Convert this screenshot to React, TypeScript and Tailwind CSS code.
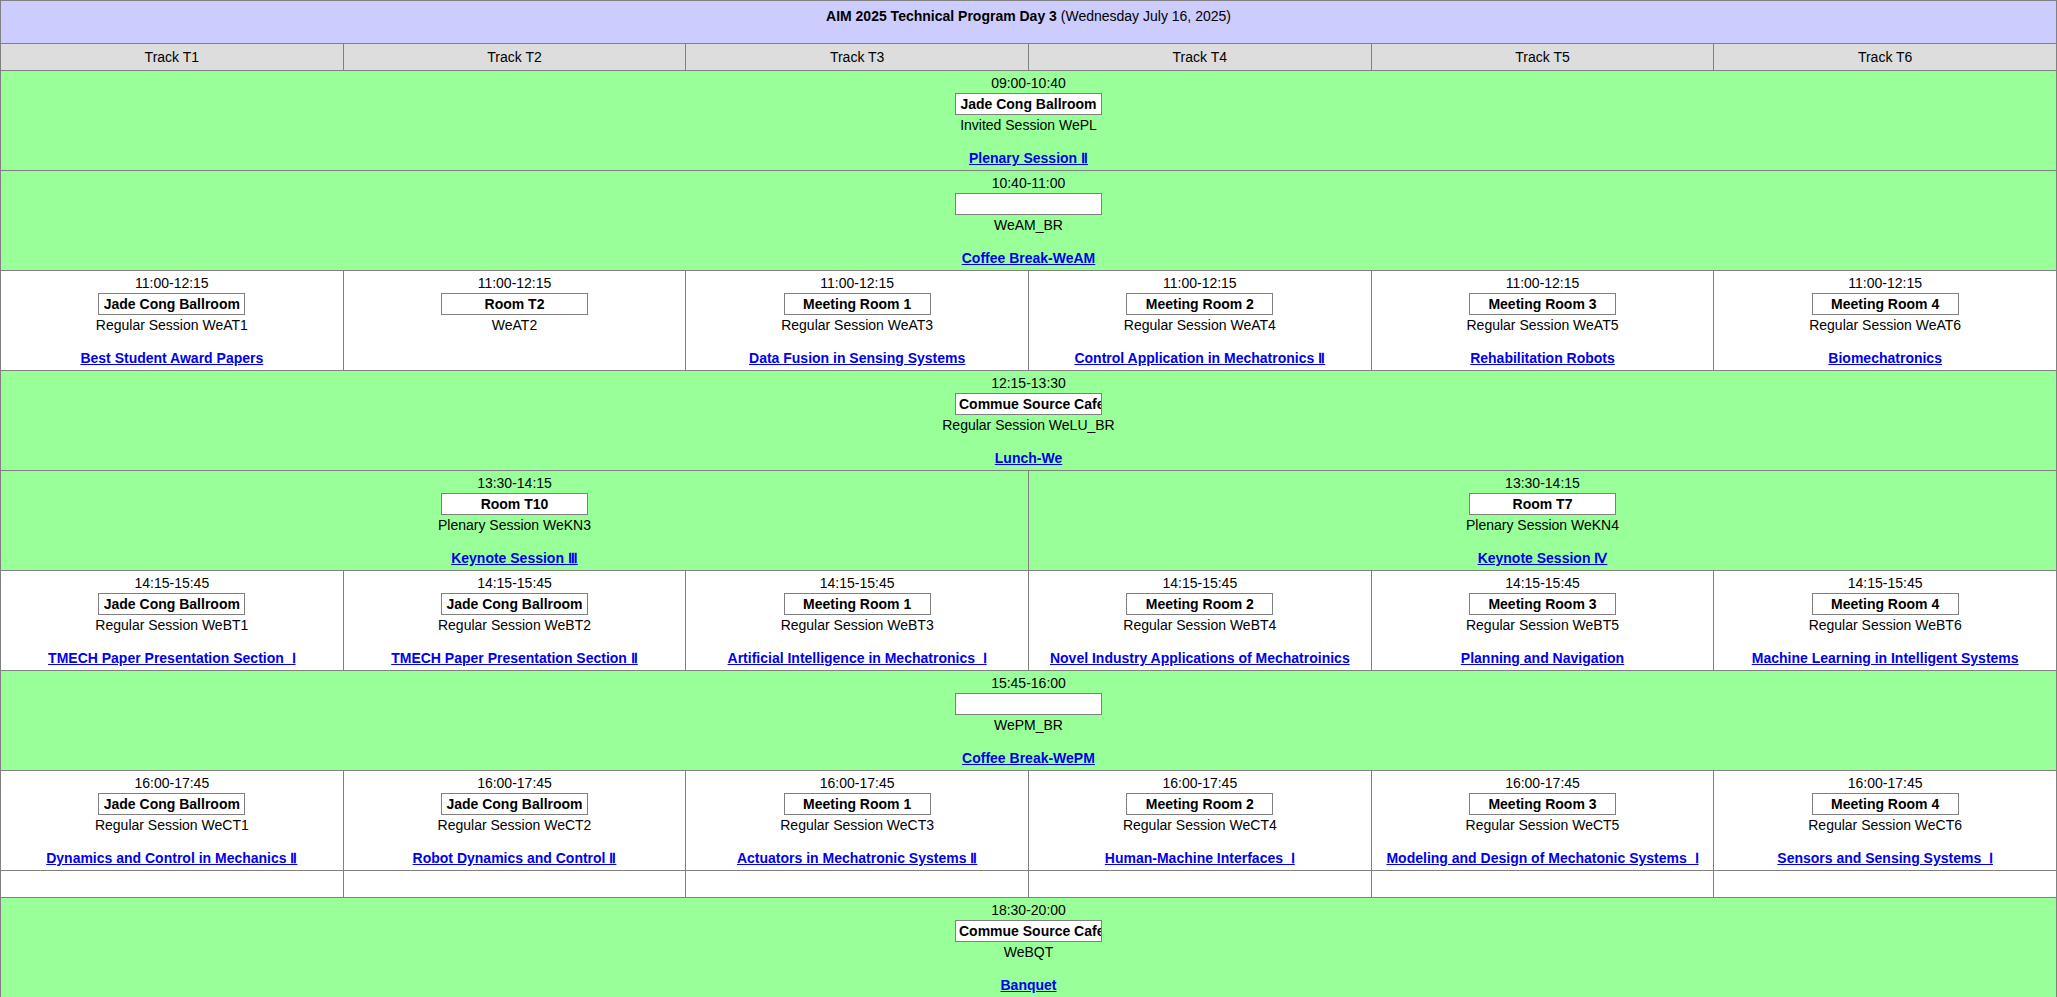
import React from 'react';

type Cell = { time: string; room: string; session: string; title?: string; span?: number };

const green = 'bg-[#99ff99]';

function SessionCell({ cell, bg }: { cell: Cell; bg: string }) {
  const span =
    cell.span === 6 ? 'col-span-6' : cell.span === 3 ? 'col-span-3' : 'col-span-1';
  return (
    <div className={`${span} ${bg} h-[100px] border-r border-b border-[#808080] flex flex-col items-center pt-[2px]`}>
      <div className="h-5 leading-5">{cell.time}</div>
      <div className="w-[147px] h-[22px] border border-[#808080] bg-white font-bold leading-5 px-[3px] text-center whitespace-nowrap overflow-hidden">
        {cell.room}
      </div>
      <div className="h-5 leading-5">{cell.session}</div>
      <div className="h-[13px]" />
      {cell.title && (
        <a href="#" className="h-5 leading-5 font-bold text-[#0000ee] underline">
          {cell.title}
        </a>
      )}
    </div>
  );
}

const rows: { bg: string; cells: Cell[] }[] = [
  { bg: green, cells: [{ time: '09:00-10:40', room: 'Jade Cong Ballroom', session: 'Invited Session WePL', title: 'Plenary Session Ⅱ', span: 6 }] },
  { bg: green, cells: [{ time: '10:40-11:00', room: '', session: 'WeAM_BR', title: 'Coffee Break-WeAM', span: 6 }] },
  {
    bg: 'bg-white',
    cells: [
      { time: '11:00-12:15', room: 'Jade Cong Ballroom', session: 'Regular Session WeAT1', title: 'Best Student Award Papers' },
      { time: '11:00-12:15', room: 'Room T2', session: 'WeAT2' },
      { time: '11:00-12:15', room: 'Meeting Room 1', session: 'Regular Session WeAT3', title: 'Data Fusion in Sensing Systems' },
      { time: '11:00-12:15', room: 'Meeting Room 2', session: 'Regular Session WeAT4', title: 'Control Application in Mechatronics Ⅱ' },
      { time: '11:00-12:15', room: 'Meeting Room 3', session: 'Regular Session WeAT5', title: 'Rehabilitation Robots' },
      { time: '11:00-12:15', room: 'Meeting Room 4', session: 'Regular Session WeAT6', title: 'Biomechatronics' },
    ],
  },
  { bg: green, cells: [{ time: '12:15-13:30', room: 'Commue Source Cafe', session: 'Regular Session WeLU_BR', title: 'Lunch-We', span: 6 }] },
  {
    bg: green,
    cells: [
      { time: '13:30-14:15', room: 'Room T10', session: 'Plenary Session WeKN3', title: 'Keynote Session Ⅲ', span: 3 },
      { time: '13:30-14:15', room: 'Room T7', session: 'Plenary Session WeKN4', title: 'Keynote Session Ⅳ', span: 3 },
    ],
  },
  {
    bg: 'bg-white',
    cells: [
      { time: '14:15-15:45', room: 'Jade Cong Ballroom', session: 'Regular Session WeBT1', title: 'TMECH Paper Presentation Section  Ⅰ' },
      { time: '14:15-15:45', room: 'Jade Cong Ballroom', session: 'Regular Session WeBT2', title: 'TMECH Paper Presentation Section Ⅱ' },
      { time: '14:15-15:45', room: 'Meeting Room 1', session: 'Regular Session WeBT3', title: 'Artificial Intelligence in Mechatronics  Ⅰ' },
      { time: '14:15-15:45', room: 'Meeting Room 2', session: 'Regular Session WeBT4', title: 'Novel Industry Applications of Mechatroinics' },
      { time: '14:15-15:45', room: 'Meeting Room 3', session: 'Regular Session WeBT5', title: 'Planning and Navigation' },
      { time: '14:15-15:45', room: 'Meeting Room 4', session: 'Regular Session WeBT6', title: 'Machine Learning in Intelligent Systems' },
    ],
  },
  { bg: green, cells: [{ time: '15:45-16:00', room: '', session: 'WePM_BR', title: 'Coffee Break-WePM', span: 6 }] },
  {
    bg: 'bg-white',
    cells: [
      { time: '16:00-17:45', room: 'Jade Cong Ballroom', session: 'Regular Session WeCT1', title: 'Dynamics and Control in Mechanics Ⅱ' },
      { time: '16:00-17:45', room: 'Jade Cong Ballroom', session: 'Regular Session WeCT2', title: 'Robot Dynamics and Control Ⅱ' },
      { time: '16:00-17:45', room: 'Meeting Room 1', session: 'Regular Session WeCT3', title: 'Actuators in Mechatronic Systems Ⅱ' },
      { time: '16:00-17:45', room: 'Meeting Room 2', session: 'Regular Session WeCT4', title: 'Human-Machine Interfaces  Ⅰ' },
      { time: '16:00-17:45', room: 'Meeting Room 3', session: 'Regular Session WeCT5', title: 'Modeling and Design of Mechatonic Systems  Ⅰ' },
      { time: '16:00-17:45', room: 'Meeting Room 4', session: 'Regular Session WeCT6', title: 'Sensors and Sensing Systems  Ⅰ' },
    ],
  },
];

const tracks = ['T1', 'T2', 'T3', 'T4', 'T5', 'T6'];

export default function App() {
  return (
    <div className="w-[2057px] text-[14px] text-black whitespace-pre" style={{ fontFamily: '"Liberation Sans", Arial, sans-serif' }}>
      <div className="grid grid-cols-6 border-l border-t border-[#808080]">
        <div className="col-span-6 h-[43px] bg-[#ccccff] border-r border-b border-[#808080] text-center pt-[5px]">
          <b>AIM 2025 Technical Program Day 3</b> (Wednesday July 16, 2025)
        </div>
        {tracks.map((t) => (
          <div key={t} className="h-[27px] bg-[#dddddd] border-r border-b border-[#808080] text-center leading-[26px]">
            Track {t}
          </div>
        ))}
        {rows.map((r, i) => (
          <React.Fragment key={i}>
            {r.cells.map((c, j) => (
              <SessionCell key={j} cell={c} bg={r.bg} />
            ))}
          </React.Fragment>
        ))}
        {tracks.map((t) => (
          <div key={'e' + t} className="h-[27px] bg-white border-r border-b border-[#808080]" />
        ))}
        <SessionCell cell={{ time: '18:30-20:00', room: 'Commue Source Cafe', session: 'WeBQT', title: 'Banquet', span: 6 }} bg={green} />
      </div>
    </div>
  );
}
